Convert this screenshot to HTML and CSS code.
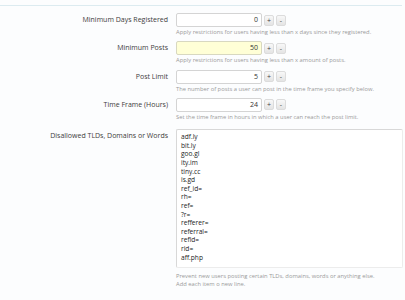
FILE: index.html
```html
<!DOCTYPE html>
<html>
<head>
<meta charset="utf-8">
<link rel="stylesheet" href="styles.css">
</head>
<body>
<div class="form">
  <div class="row">
    <div class="label">Minimum Days Registered</div>
    <div class="ctrl">
      <div class="spin">
        <div class="num">0</div>
        <div class="btn">+</div>
        <div class="btn">-</div>
      </div>
      <div class="desc">Apply restrictions for users having less than x days since they registered.</div>
    </div>
  </div>
  <div class="row">
    <div class="label">Minimum Posts</div>
    <div class="ctrl">
      <div class="spin">
        <div class="num focus">50</div>
        <div class="btn">+</div>
        <div class="btn">-</div>
      </div>
      <div class="desc">Apply restrictions for users having less than x amount of posts.</div>
    </div>
  </div>
  <div class="row">
    <div class="label">Post Limit</div>
    <div class="ctrl">
      <div class="spin">
        <div class="num">5</div>
        <div class="btn">+</div>
        <div class="btn">-</div>
      </div>
      <div class="desc">The number of posts a user can post in the time frame you specify below.</div>
    </div>
  </div>
  <div class="row">
    <div class="label">Time Frame (Hours)</div>
    <div class="ctrl">
      <div class="spin">
        <div class="num">24</div>
        <div class="btn">+</div>
        <div class="btn">-</div>
      </div>
      <div class="desc">Set the time frame in hours in which a user can reach the post limit.</div>
    </div>
  </div>
  <div class="row area-row">
    <div class="label">Disallowed TLDs, Domains or Words</div>
    <div class="ctrl">
      <div class="area">
        <div>adf.ly</div>
        <div>bit.ly</div>
        <div>goo.gl</div>
        <div>ity.im</div>
        <div>tiny.cc</div>
        <div>is.gd</div>
        <div>ref_id=</div>
        <div>rh=</div>
        <div>ref=</div>
        <div>?r=</div>
        <div>refferer=</div>
        <div>referral=</div>
        <div>refid=</div>
        <div>rid=</div>
        <div>aff.php</div>
      </div>
      <div class="desc">Prevent new users posting certain TLDs, domains, words or anything else.<br>Add each item o new line.</div>
    </div>
  </div>
</div>
</body>
</html>
```
FILE: styles.css
```css
html, body {
  margin: 0;
  padding: 0;
  background: #fcfdfe;
  overflow: hidden;
}
body {
  font-family: "Open Sans", "DejaVu Sans", sans-serif;
  color: #3a3a3a;
  width: 405px;
  height: 300px;
}
.form {
  margin-top: 5px;
  border-top: 1px solid #dcebf0;
  width: 402px;
  padding-top: 7px;
}
.row {
  display: grid;
  grid-template-columns: 168px 1fr;
  column-gap: 8px;
  padding-bottom: 5.3px;
}
.label {
  text-align: right;
  font-size: 7px;
  line-height: 14px;
  color: #3c3c3c;
  white-space: nowrap;
}
.spin {
  display: flex;
  align-items: center;
  gap: 2px;
  height: 14px;
}
.num {
  box-sizing: border-box;
  width: 86px;
  height: 14px;
  border: 1px solid #d4d4d4;
  border-radius: 2px;
  background: #ffffff;
  text-align: right;
  padding-right: 3px;
  font-size: 7px;
  line-height: 12px;
  color: #333;
}
.num.focus {
  background: #ffffd6;
  border-color: #d8d8c0;
}
.btn {
  box-sizing: border-box;
  width: 10px;
  height: 11px;
  border: 1px solid #dcdcdc;
  border-radius: 2px;
  background: linear-gradient(#f8f8f8, #e4e4e4);
  font-size: 7px;
  line-height: 9px;
  text-align: center;
  color: #444;
}
.desc {
  margin-top: 1px;
  font-size: 5.8px;
  line-height: 8px;
  color: #9a9a9a;
  white-space: nowrap;
}
.area-row {
  padding-top: 3px;
}
.area {
  box-sizing: border-box;
  width: 227px;
  height: 139px;
  border: 1px solid #d8d8d8;
  border-bottom-color: #ececec;
  border-right-color: #ececec;
  border-radius: 2px;
  background: #ffffff;
  padding: 3px 0 0 4px;
  font-size: 6.6px;
  line-height: 8.6px;
  color: #222;
  margin-bottom: 4px;
}
```
